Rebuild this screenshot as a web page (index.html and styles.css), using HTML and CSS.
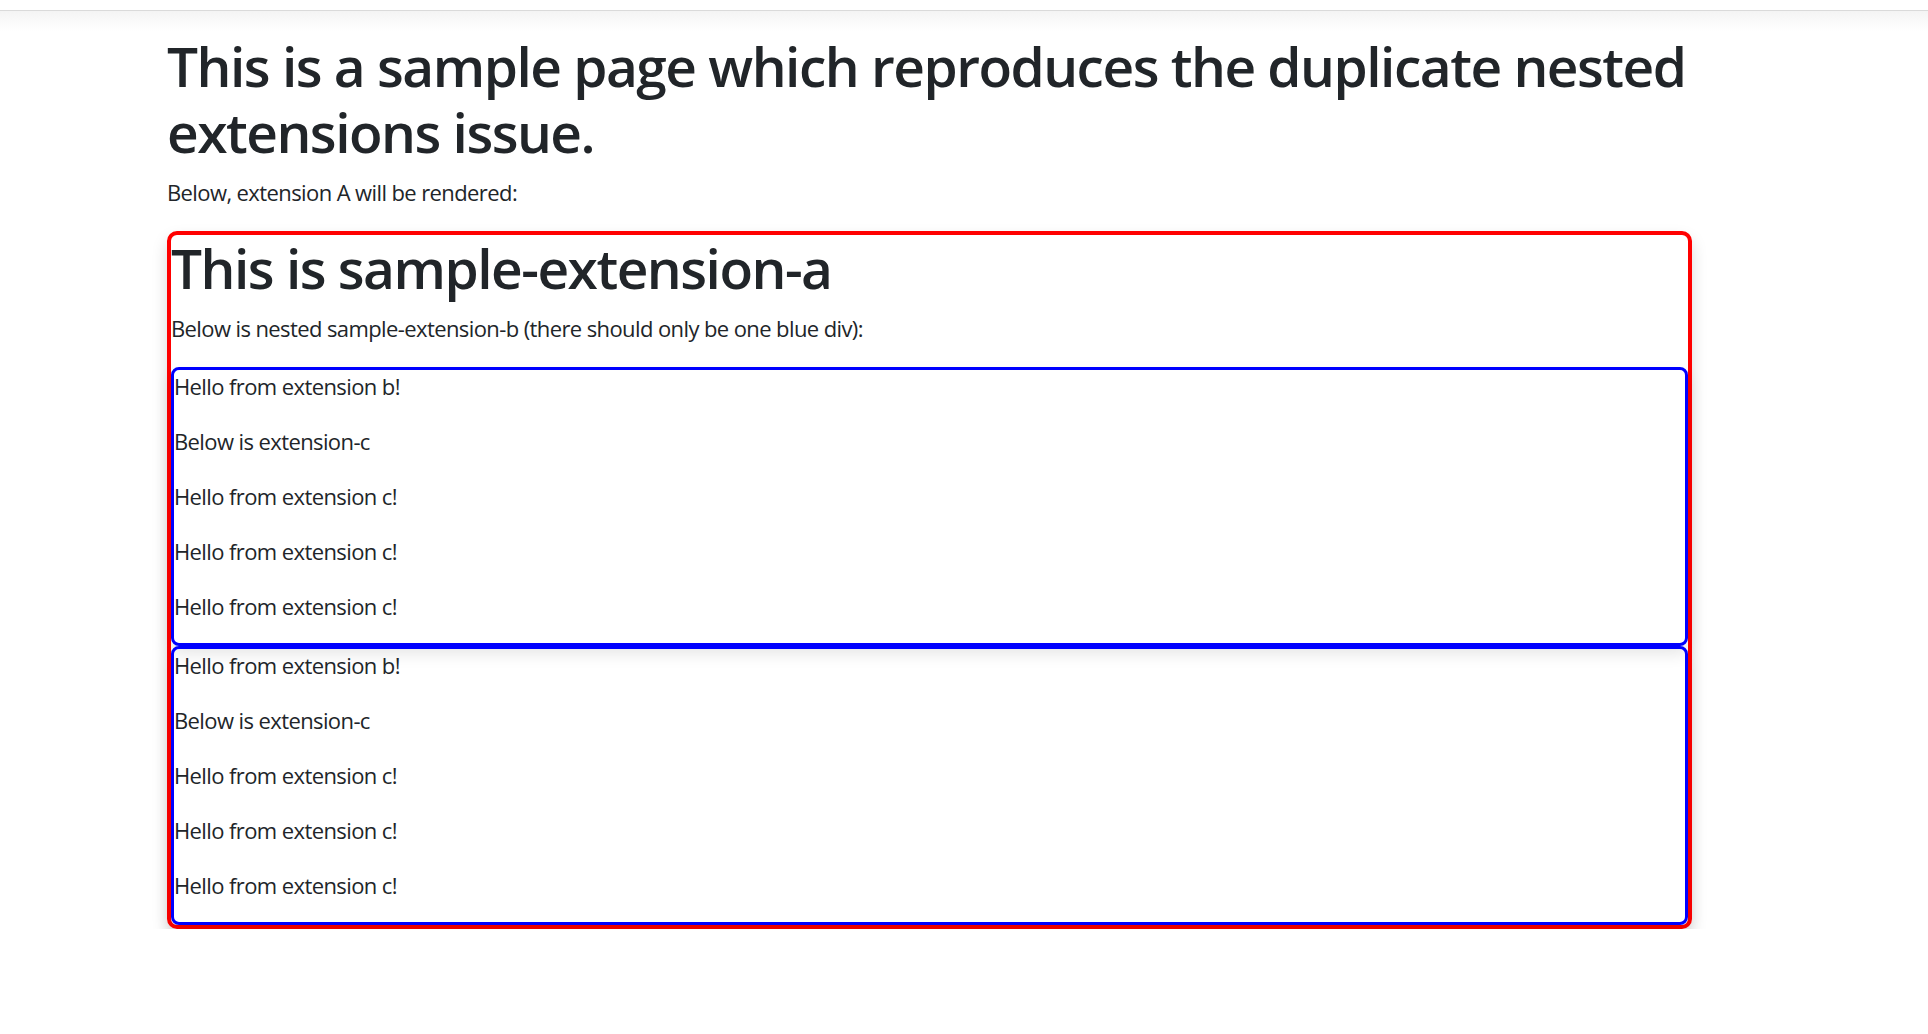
FILE: index.html
```html
<!DOCTYPE html>
<html lang="en">
<head>
<meta charset="utf-8">
<title>Sample page</title>
<link rel="stylesheet" href="styles.css">
</head>
<body>
<div class="topbar"></div>
<main class="container">
  <h1 class="page-title">This is a sample page which reproduces the duplicate nested extensions issue.</h1>
  <p>Below, extension A will be rendered:</p>
  <div class="ext-a">
    <h1 class="ext-title">This is sample-extension-a</h1>
    <p>Below is nested sample-extension-b (there should only be one blue div):</p>
    <div class="ext-b">
      <p>Hello from extension b!</p>
      <p>Below is extension-c</p>
      <p>Hello from extension c!</p>
      <p>Hello from extension c!</p>
      <p>Hello from extension c!</p>
    </div>
    <div class="ext-b">
      <p>Hello from extension b!</p>
      <p>Below is extension-c</p>
      <p>Hello from extension c!</p>
      <p>Hello from extension c!</p>
      <p>Hello from extension c!</p>
    </div>
  </div>
</main>
</body>
</html>
```
FILE: styles.css
```css
html, body {
  margin: 0;
  padding: 0;
  background: #fff;
}
body {
  font-family: "Open Sans", "Noto Sans", "Liberation Sans", sans-serif;
  font-size: 22px;
  line-height: 1.5;
  color: #212529;
  position: relative;
}
.topbar {
  height: 10px;
  border-bottom: 1px solid #dadada;
  position: relative;
}
.topbar::after {
  content: "";
  position: absolute;
  left: 0;
  right: 0;
  top: 11px;
  height: 20px;
  background: linear-gradient(to bottom, #f4f4f4, rgba(255,255,255,0));
}
.container {
  width: 1525px;
  margin-left: 167px;
  padding-top: 22px;
  position: relative;
}
h1 {
  font-size: 55px;
  font-weight: 600;
  letter-spacing: -1.5px;
  line-height: 66px;
  margin: 0 0 11px 0;
}
p {
  margin: 0 0 22px 0;
  line-height: 33px;
  letter-spacing: -0.6px;
}
.ext-a {
  border: 4px solid #ff0000;
  border-radius: 10px;
  box-shadow: 0 8px 16px rgba(0,0,0,0.15);
}
.ext-b {
  border: 3px solid #0000ff;
  border-radius: 8px;
  box-shadow: 0 8px 16px rgba(0,0,0,0.1);
}
.ext-b p:last-child {
  margin-bottom: 20px;
}
```
